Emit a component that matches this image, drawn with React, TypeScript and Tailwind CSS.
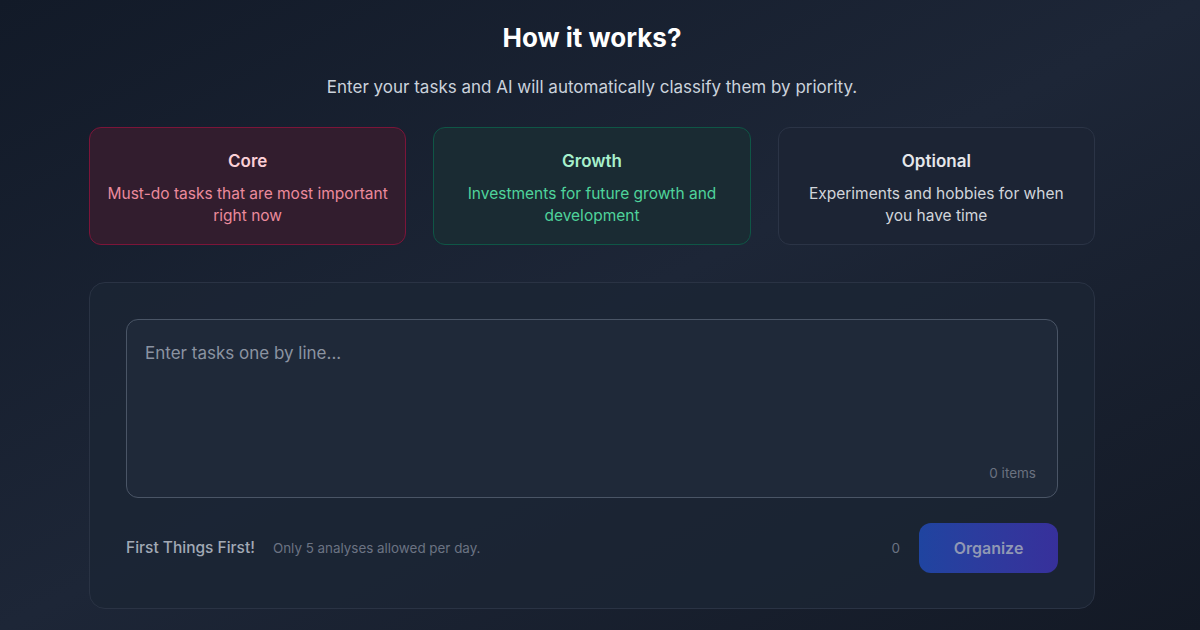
const categories = [
  {
    title: "Core",
    desc: "Must-do tasks that are most important right now",
    box: "bg-[#321d2e] border-[#7c1539]",
    titleColor: "text-[#fbcfd6]",
    descColor: "text-[#eb8a9c]",
  },
  {
    title: "Growth",
    desc: "Investments for future growth and development",
    box: "bg-[#1a2b33] border-[#0f5646]",
    titleColor: "text-[#a7f0cc]",
    descColor: "text-[#4fd39b]",
  },
  {
    title: "Optional",
    desc: "Experiments and hobbies for when you have time",
    box: "bg-[#1c2434] border-[#2b3446]",
    titleColor: "text-[#e5e7eb]",
    descColor: "text-[#d1d5db]",
  },
];

export default function App() {
  return (
    <div
      className="min-h-[630px] w-full bg-gradient-to-br from-[#121a28] via-[#1d2637] to-[#131925] pr-4"
      style={{ fontFamily: "Inter, 'Noto Sans', sans-serif" }}
    >
      <div className="mx-auto w-[1006px] pt-[20px]">
        <h2 className="text-center text-[26px] leading-9 font-bold text-white">
          How it works?
        </h2>
        <p className="mt-[17px] text-center text-[17px] leading-7 text-[#cbd2dc]">
          Enter your tasks and AI will automatically classify them by priority.
        </p>

        <div className="mt-[26px] grid grid-cols-3 gap-[27px]">
          {categories.map((c) => (
            <div
              key={c.title}
              className={`h-[118px] rounded-xl border px-4 pt-[21px] text-center ${c.box}`}
            >
              <h3 className={`text-[17px] leading-6 font-semibold ${c.titleColor}`}>
                {c.title}
              </h3>
              <p className={`mt-[10px] text-[15.5px] leading-[22px] ${c.descColor}`}>
                {c.desc}
              </p>
            </div>
          ))}
        </div>

        <div className="mt-[37px] rounded-2xl border border-[#2a3344] bg-[#1c2534]/80 px-9 pt-9 pb-[35px]">
          <div className="relative h-[179px] rounded-xl border border-[#4a5566] bg-[#1f2939]">
            <textarea
              className="h-full w-full resize-none bg-transparent px-[18px] py-[19px] text-[17px] leading-7 text-gray-200 outline-none placeholder:text-[#8b93a1]"
              placeholder="Enter tasks one by line..."
            />
            <span className="absolute right-[21px] bottom-[14px] text-[13.5px] text-[#6b7280]">
              0 items
            </span>
          </div>

          <div className="mt-[25px] flex items-center">
            <span className="text-[15.5px] font-medium text-[#a2a9b5]">
              First Things First!
            </span>
            <span className="ml-[18px] text-[13.4px] text-[#6b7383]">
              Only 5 analyses allowed per day.
            </span>
            <span className="ml-auto mr-[19px] text-[13.5px] text-[#6b7383]">0</span>
            <button className="h-[50px] w-[139px] rounded-xl bg-gradient-to-r from-[#1f44a0] to-[#37309b] text-[16px] font-semibold text-[#9098b4]">
              Organize
            </button>
          </div>
        </div>
      </div>
    </div>
  );
}
